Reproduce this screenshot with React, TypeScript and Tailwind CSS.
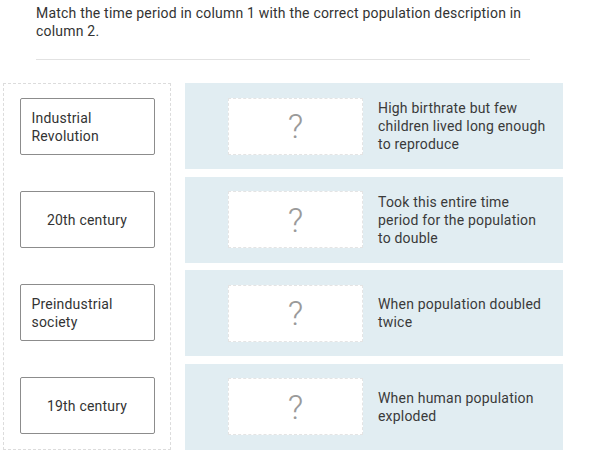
import React from 'react';

const periods = ['Industrial Revolution', '20th century', 'Preindustrial society', '19th century'];

const descriptions = [
  'High birthrate but few children lived long enough to reproduce',
  'Took this entire time period for the population to double',
  'When population doubled twice',
  'When human population exploded',
];

export default function App() {
  return (
    <div className="w-[591px] h-[456px] bg-white text-[#333] text-[14px] leading-[18px] tracking-[0.2px]" style={{ fontFamily: 'Roboto, "Liberation Sans", sans-serif' }}>
      <div className="pl-[36px] pt-[4px] w-[530px]">
        <p>Match the time period in column 1 with the correct population description in column 2.</p>
        <div className="mt-[19px] h-px bg-[#e2e2e2]" />
      </div>

      <div className="flex gap-[14px] pl-[3px] mt-[23px]">
        {/* column 1 */}
        <div className="w-[168px] border border-dashed border-[#dcdcdc] flex flex-col gap-[7.5px]">
          {periods.map((p) => (
            <div key={p} className="h-[85.5px] flex items-center justify-center">
              <div className="w-[135px] h-[57px] border border-[#8c8c8c] rounded-[2px] px-[11px] flex items-center justify-center">
                <span>{p}</span>
              </div>
            </div>
          ))}
        </div>

        {/* column 2 */}
        <div className="w-[378px] flex flex-col gap-[7.5px]">
          {descriptions.map((d) => (
            <div key={d} className="h-[86px] bg-[#e1edf2] flex items-center pl-[43px] pr-[14px]">
              <div className="w-[135px] h-[57px] shrink-0 bg-white border border-dashed border-[#e4e4e4] flex items-center justify-center">
                <span className="text-[34px] leading-none font-light text-[#9a9a9a]">?</span>
              </div>
              <p className="ml-[15px] text-[#3a3a3a]">{d}</p>
            </div>
          ))}
        </div>
      </div>
    </div>
  );
}
